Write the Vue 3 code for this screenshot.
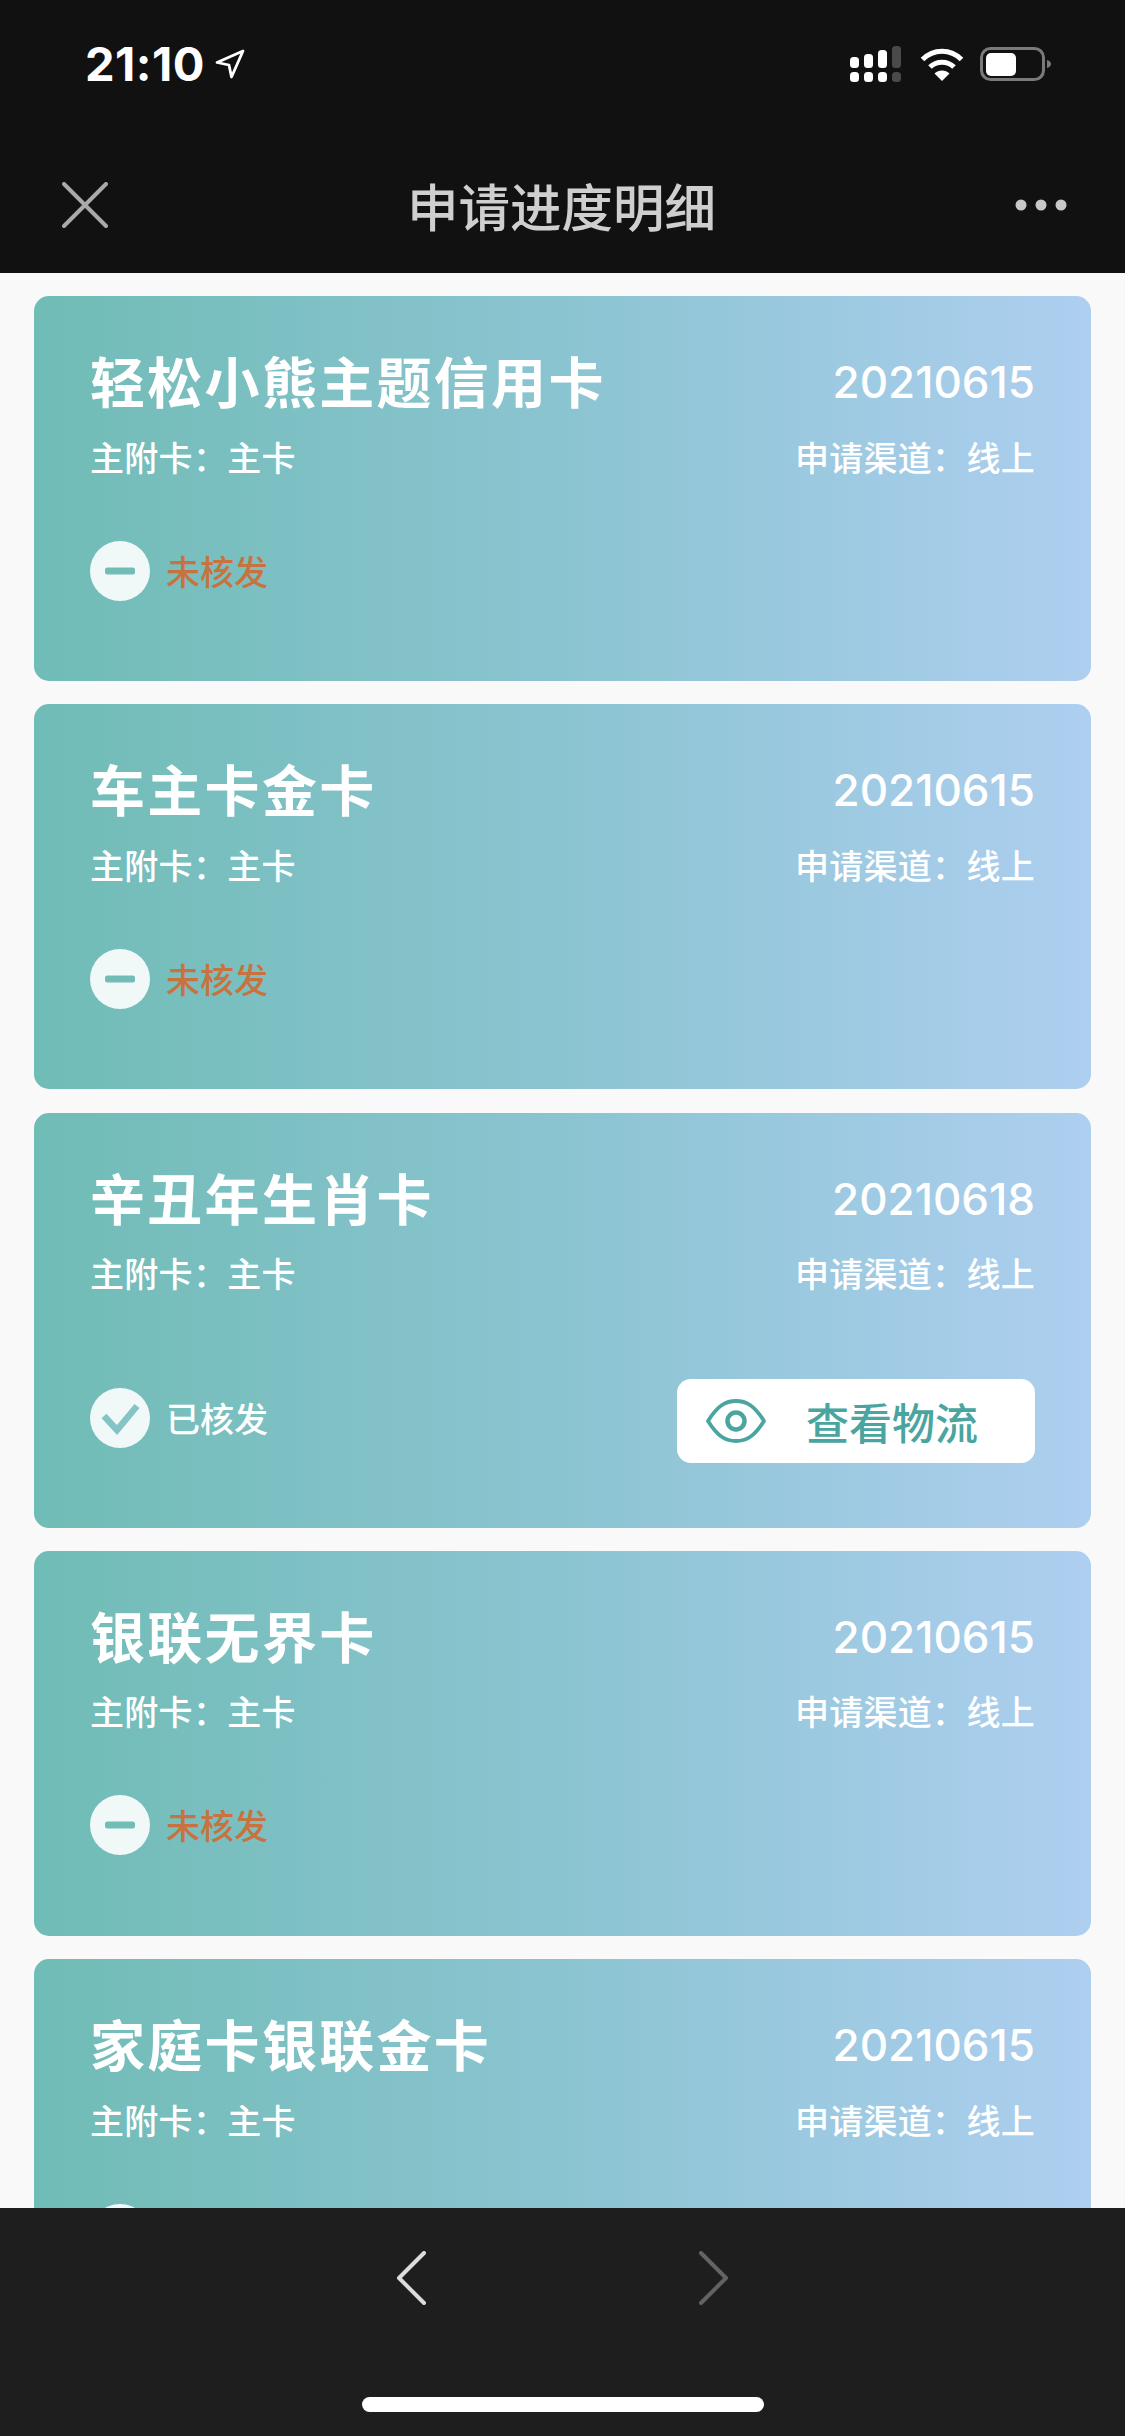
<script setup>
const cards = [
  { name: '轻松小熊主题信用卡', date: '20210615', done: false },
  { name: '车主卡金卡', date: '20210615', done: false },
  { name: '辛丑年生肖卡', date: '20210618', done: true },
  { name: '银联无界卡', date: '20210615', done: false },
  { name: '家庭卡银联金卡', date: '20210615', done: false },
]
</script>

<template>
  <div class="phone">
    <header class="top">
      <div class="status">
        <div class="clock">
          <span class="time">21:10</span>
          <svg class="loc" width="30" height="30" viewBox="0 0 30 30">
            <path d="M28 2 2 13.500l12 2.500 2.500 12z" fill="none" stroke="#fff" stroke-width="2.800" stroke-linejoin="round" />
          </svg>
        </div>
        <div class="sys">
          <svg width="54" height="36" viewBox="0 0 54 36">
            <g fill="#fff">
              <rect x="0" y="11" width="9" height="11" rx="3.500" />
              <rect x="14" y="8" width="9" height="14" rx="3.500" />
              <rect x="28" y="4" width="9" height="18" rx="3.500" />
              <rect x="0" y="26" width="9" height="10" rx="3.500" />
              <rect x="14" y="26" width="9" height="10" rx="3.500" />
              <rect x="28" y="26" width="9" height="10" rx="3.500" />
            </g>
            <g fill="#4a4a4a">
              <rect x="42" y="0" width="9" height="22" rx="3.500" />
              <rect x="42" y="26" width="9" height="10" rx="3.500" />
            </g>
          </svg>
          <svg class="wifi" width="46" height="34" viewBox="0 0 46 34">
            <g fill="none" stroke="#fff" stroke-width="5">
              <path d="M3.500 12.500C14.500 1.500 31.500 1.500 42.500 12.500" />
              <path d="M11 20C17.500 13.500 28.500 13.500 35 20" />
            </g>
            <path d="M15.500 26.500C19.500 22.500 26.500 22.500 30.500 26.500L23 34z" fill="#fff" />
          </svg>
          <svg class="batt" width="74" height="34" viewBox="0 0 74 34">
            <rect x="1.500" y="1.500" width="62" height="31" rx="9" fill="none" stroke="#7a7a7a" stroke-width="3" />
            <rect x="6" y="6" width="30" height="23" rx="5" fill="#fff" />
            <path d="M67 13c3 1 4 2.500 4 4s-1 3-4 4z" fill="#7a7a7a" />
          </svg>
        </div>
      </div>
      <nav class="nav">
        <svg width="46" height="46" viewBox="0 0 46 46">
          <path d="M2 2 44 44M44 2 2 44" stroke="#a9a9a9" stroke-width="4" stroke-linecap="round" />
        </svg>
        <h1 class="title">申请进度明细</h1>
        <svg width="52" height="12" viewBox="0 0 52 12">
          <g fill="#c8c8c8">
            <circle cx="6" cy="6" r="5.500" />
            <circle cx="26" cy="6" r="5.500" />
            <circle cx="46" cy="6" r="5.500" />
          </g>
        </svg>
      </nav>
    </header>

    <main class="list">
      <section v-for="card in cards" :key="card.name" class="card" :class="{ done: card.done }">
        <div class="line head">
          <span class="name">{{ card.name }}</span>
          <span class="date">{{ card.date }}</span>
        </div>
        <div class="line sub">
          <span>主附卡：主卡</span>
          <span>申请渠道：线上</span>
        </div>
        <div class="line state">
          <div class="result">
            <svg width="60" height="60" viewBox="0 0 60 60">
              <circle cx="30" cy="30" r="30" fill="#f0f8f8" />
              <path v-if="card.done" d="M14 28 27 42 47 18" fill="none" stroke="#84c3c6" stroke-width="6.500" />
              <rect v-else x="15" y="26.500" width="30" height="7" rx="2.500" fill="#72bcb8" />
            </svg>
            <span class="label">{{ card.done ? '已核发' : '未核发' }}</span>
          </div>
          <button v-if="card.done" class="track">
            <svg width="60" height="44" viewBox="0 0 60 44">
              <path d="M2 22C12 6 20 2 30 2S48 6 58 22C48 38 40 42 30 42S12 38 2 22z" fill="none" stroke="#4aa5a0" stroke-width="3.800" stroke-linejoin="round" />
              <circle cx="30" cy="22" r="8.500" fill="none" stroke="#4aa5a0" stroke-width="4.500" />
            </svg>
            <span>查看物流</span>
          </button>
        </div>
      </section>
    </main>

    <footer class="bottom">
      <div class="arrows">
        <svg width="32" height="54" viewBox="0 0 32 54">
          <path d="M29 2 4 27 29 52" fill="none" stroke="#dcdcdc" stroke-width="4" stroke-linecap="round" stroke-linejoin="round" />
        </svg>
        <svg width="32" height="54" viewBox="0 0 32 54">
          <path d="M3 2 28 27 3 52" fill="none" stroke="#636363" stroke-width="4" stroke-linecap="round" stroke-linejoin="round" />
        </svg>
      </div>
      <div class="home"></div>
    </footer>
  </div>
</template>

<style scoped>
.phone {
  width: 1125px;
  height: 2436px;
  display: flex;
  flex-direction: column;
  overflow: hidden;
  background: #f9f9f9;
  font-family: "Noto Sans CJK SC", "Noto Sans", sans-serif;
}
.top {
  height: 273px;
  flex: none;
  background: #111;
}
.status {
  height: 128px;
  padding: 0 71px 0 85px;
  display: flex;
  justify-content: space-between;
  align-items: flex-start;
}
.clock {
  display: flex;
  align-items: center;
  gap: 10px;
  margin-top: 36px;
}
.time {
  font-family: Inter, sans-serif;
  font-weight: 700;
  font-size: 47px;
  line-height: 56px;
  color: #fff;
  letter-spacing: 0.5px;
}
.sys {
  display: flex;
  align-items: center;
  margin-top: 46px;
}
.wifi {
  margin-left: 15px;
}
.batt {
  margin-left: 15px;
}
.nav {
  height: 145px;
  padding: 9px 58px 0 62px;
  display: flex;
  justify-content: space-between;
  align-items: center;
  box-sizing: border-box;
}
.title {
  margin: 0;
  font-size: 51.500px;
  line-height: 70px;
  font-weight: 500;
  color: #cfcfcf;
}
.list {
  flex: 1;
  min-height: 0;
  overflow: hidden;
  padding: 23px 34px 0;
  display: flex;
  flex-direction: column;
  gap: 23.300px;
}
.card {
  flex: none;
  height: 385px;
  box-sizing: border-box;
  padding: 49px 56px 0;
  border-radius: 15px;
  background: linear-gradient(90deg, #70bcb6 0%, #8ec5d4 55%, #aecff0 100%);
  color: #fff;
}
.card.done {
  height: 415px;
}
.line {
  display: flex;
  justify-content: space-between;
  align-items: center;
}
.head {
  height: 68px;
}
.name {
  font-size: 55px;
  line-height: 68px;
  font-weight: 700;
  letter-spacing: 2.300px;
}
.date {
  margin-top: 6px;
  font-family: Inter, sans-serif;
  font-size: 44px;
  line-height: 68px;
  font-weight: 500;
}
.sub {
  margin-top: 9.500px;
  font-size: 34px;
  line-height: 68px;
  font-weight: 500;
  letter-spacing: 0.300px;
}
.state {
  margin-top: 50px;
  height: 60px;
}
.done .state {
  margin-top: 72px;
  height: 84px;
}
.result {
  display: flex;
  align-items: center;
  gap: 16px;
}
.done .result {
  margin-top: -6px;
}
.label {
  font-size: 34px;
  line-height: 48px;
  font-weight: 500;
  color: #c8733f;
}
.done .label {
  color: #fff;
}
.track {
  width: 358px;
  height: 84px;
  padding: 0 0 0 29px;
  border: 0;
  border-radius: 14px;
  background: #fff;
  display: flex;
  align-items: center;
  gap: 40px;
  font-family: inherit;
  font-size: 43px;
  font-weight: 500;
  color: #4aa5a0;
}
.bottom {
  height: 228px;
  flex: none;
  position: relative;
  background: #1e1e1e;
}
.arrows {
  display: flex;
  justify-content: center;
  gap: 271px;
  padding-top: 43px;
}
.home {
  position: absolute;
  left: 362px;
  top: 189px;
  width: 402px;
  height: 15px;
  border-radius: 8px;
  background: #fff;
}
</style>
